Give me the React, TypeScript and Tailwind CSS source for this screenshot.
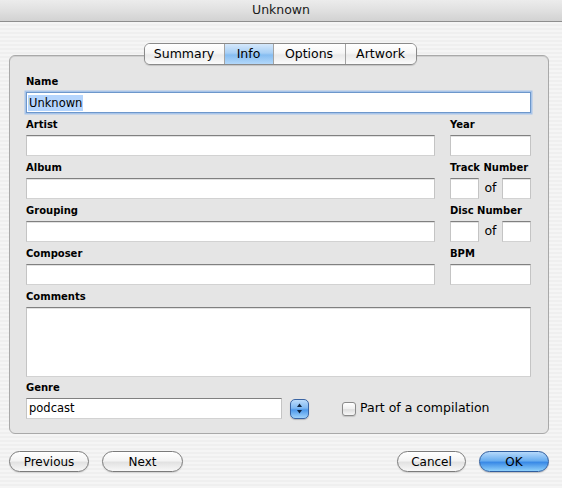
import React from "react";

const Label = ({ children }: { children: React.ReactNode }) => (
  <div className="h-[13px] leading-[13px] text-[10px] font-bold text-black mb-[4px] whitespace-nowrap">
    {children}
  </div>
);

const Box = ({ className = "" }: { className?: string }) => (
  <div
    className={`h-[21px] bg-white border border-x-[#c4c4c4] border-b-[#d2d2d2] border-t-[#808080] shadow-[inset_0_1px_0_#e2e2e2] ${className}`}
  />
);

const Tab = ({
  children,
  w,
  selected = false,
  first = false,
}: {
  children: React.ReactNode;
  w: string;
  selected?: boolean;
  first?: boolean;
}) => (
  <div
    className={`${w} h-full flex items-center justify-center text-[12.5px] text-black ${
      first ? "" : "border-l border-l-[#a3a3a3]"
    } ${
      selected
        ? "bg-[linear-gradient(180deg,#d5e8fb_0%,#a7cff5_45%,#86bdf1_55%,#b3d8fa_100%)]"
        : "bg-[linear-gradient(180deg,#ffffff_0%,#f6f6f6_45%,#e9e9e9_55%,#fbfbfb_100%)]"
    }`}
  >
    {children}
  </div>
);

const PillButton = ({
  children,
  w,
  className = "",
}: {
  children: React.ReactNode;
  w: string;
  className?: string;
}) => (
  <div
    className={`${w} h-[21px] rounded-full border border-[#7b7b7b] bg-[linear-gradient(180deg,#ffffff_0%,#f4f4f4_45%,#e2e2e2_55%,#f8f8f8_100%)] shadow-[0_1px_1px_rgba(0,0,0,0.12)] flex items-center justify-center text-[12px] text-black ${className}`}
  >
    {children}
  </div>
);

export default function App() {
  return (
    <div
      className="w-[562px] h-[488px] overflow-hidden bg-[repeating-linear-gradient(180deg,#efefef_0px,#efefef_2px,#f5f5f5_2px,#f5f5f5_4px)] flex flex-col"
      style={{ fontFamily: '"DejaVu Sans", sans-serif' }}
    >
      {/* Title bar */}
      <div className="h-[22px] shrink-0 border-b border-b-[#8e8e8e] bg-[linear-gradient(180deg,#ececec_0%,#e0e0e0_50%,#d2d2d2_100%)] flex items-center justify-center">
        <span className="text-[12.5px] text-[#1a1a1a] leading-none">Unknown</span>
      </div>

      {/* Tabs */}
      <div className="mt-[21px] flex justify-center pr-[2px] relative z-10">
        <div className="h-[22px] flex rounded-[6px] border border-[#8a8a8a] overflow-hidden shadow-[0_1px_1px_rgba(0,0,0,0.15)]">
          <Tab w="w-[79px]" first>
            Summary
          </Tab>
          <Tab w="w-[49px]" selected>
            Info
          </Tab>
          <Tab w="w-[72px]">Options</Tab>
          <Tab w="w-[71px]">Artwork</Tab>
        </div>
      </div>

      {/* Panel */}
      <div className="-mt-[10px] ml-[9px] w-[540px] rounded-[6px] border border-[#a9a9a9] bg-[#e5e5e5] shadow-[inset_0_1px_0_#d0d0d0] pt-[19px] pl-[16px] pr-[17px] pb-[14px]">
        <div className="grid grid-cols-[409px_81px] gap-x-[15px] gap-y-[5px]">
          {/* Name */}
          <div className="col-span-2">
            <Label>Name</Label>
            <div className="h-[21px] bg-white border border-[#6d97cb] shadow-[0_0_0_1.5px_#a7c4e9] flex items-center pl-[1px]">
              <span className="text-[11.5px] leading-[16px] bg-[#b5d5fd] px-[1px] text-black">Unknown</span>
            </div>
          </div>

          {/* Artist / Year */}
          <div>
            <Label>Artist</Label>
            <Box />
          </div>
          <div>
            <Label>Year</Label>
            <Box />
          </div>

          {/* Album / Track Number */}
          <div>
            <Label>Album</Label>
            <Box />
          </div>
          <div>
            <Label>Track Number</Label>
            <div className="flex items-center">
              <Box className="w-[29px]" />
              <div className="w-[23px] text-center text-[12.5px] text-black leading-none">of</div>
              <Box className="w-[29px]" />
            </div>
          </div>

          {/* Grouping / Disc Number */}
          <div>
            <Label>Grouping</Label>
            <Box />
          </div>
          <div>
            <Label>Disc Number</Label>
            <div className="flex items-center">
              <Box className="w-[29px]" />
              <div className="w-[23px] text-center text-[12.5px] text-black leading-none">of</div>
              <Box className="w-[29px]" />
            </div>
          </div>

          {/* Composer / BPM */}
          <div>
            <Label>Composer</Label>
            <Box />
          </div>
          <div>
            <Label>BPM</Label>
            <Box />
          </div>

          {/* Comments */}
          <div className="col-span-2">
            <Label>Comments</Label>
            <Box className="h-[70px]" />
          </div>

          {/* Genre */}
          <div className="col-span-2 -mt-[1px]">
            <Label>Genre</Label>
            <div className="flex items-center">
              <div className="w-[256px] h-[21px] bg-white border border-x-[#c4c4c4] border-b-[#d2d2d2] border-t-[#808080] flex items-center pl-[2px]">
                <span className="text-[11.5px] text-black leading-none">podcast</span>
              </div>
              <div className="ml-[8px] w-[19px] h-[20px] rounded-[5px] border border-[#3a64a3] bg-[linear-gradient(180deg,#bcdcfb_0%,#7fb8f2_45%,#4d98ea_55%,#9fd2fb_100%)] shadow-[0_1px_1px_rgba(0,0,0,0.2)] flex items-center justify-center">
                <svg width="9" height="13" viewBox="0 0 9 13">
                  <path d="M4.5 1.5 L7 5 L2 5 Z" fill="#10243f" />
                  <path d="M4.5 11.5 L7 8 L2 8 Z" fill="#10243f" />
                </svg>
              </div>
              <div className="ml-[33px] w-[14px] h-[14px] rounded-[3px] border border-[#8a8a8a] bg-[linear-gradient(180deg,#ffffff_0%,#eeeeee_50%,#dedede_55%,#f7f7f7_100%)] shadow-[0_1px_1px_rgba(0,0,0,0.15)]" />
              <span className="ml-[4px] text-[12.5px] text-black leading-none">Part of a compilation</span>
            </div>
          </div>
        </div>
      </div>

      {/* Buttons */}
      <div className="mt-[17px] flex items-center">
        <PillButton w="w-[80px]" className="ml-[9px]">
          Previous
        </PillButton>
        <PillButton w="w-[81px]" className="ml-[13px]">
          Next
        </PillButton>
        <div className="flex-1" />
        <PillButton w="w-[69px]">Cancel</PillButton>
        <div
          className="ml-[13px] mr-[13px] w-[70px] h-[21px] rounded-full border border-[#2f5d9e] bg-[linear-gradient(180deg,#b6d9fb_0%,#6aaef0_45%,#3a8ae6_55%,#8ed0fb_100%)] shadow-[0_1px_1px_rgba(0,0,0,0.2)] flex items-center justify-center text-[12px] text-black"
        >
          OK
        </div>
      </div>
    </div>
  );
}
